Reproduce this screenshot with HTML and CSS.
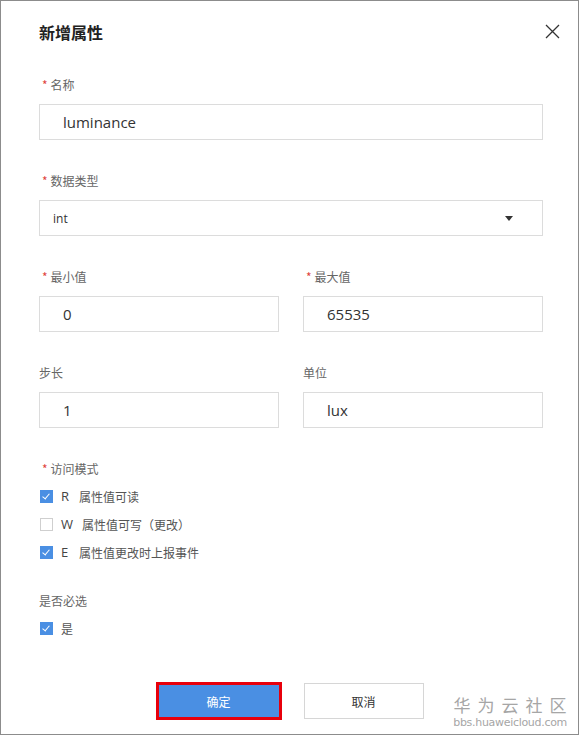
FILE: index.html
```html
<!DOCTYPE html>
<html lang="zh-CN">
<head>
  <meta charset="UTF-8" />
  <meta name="viewport" content="width=device-width, initial-scale=1.0" />
  <title>新增属性</title>
  <link rel="stylesheet" href="styles.css">
</head>
<body>
  <div class="dialog">
    <div class="dialog-head">
      <h3>新增属性</h3>
      <span class="close">
        <svg width="15" height="15" viewBox="0 0 15 15"><path d="M1 1 L14 14 M14 1 L1 14" stroke="#333" stroke-width="1.3" fill="none"/></svg>
      </span>
    </div>

    <div class="field">
      <label class="required">名称</label>
      <div class="input">luminance</div>
    </div>

    <div class="field">
      <label class="required">数据类型</label>
      <div class="input select">int<span class="caret"></span></div>
    </div>

    <div class="row">
      <div class="field">
        <label class="required">最小值</label>
        <div class="input">0</div>
      </div>
      <div class="field">
        <label class="required">最大值</label>
        <div class="input">65535</div>
      </div>
    </div>

    <div class="row">
      <div class="field">
        <label>步长</label>
        <div class="input">1</div>
      </div>
      <div class="field">
        <label>单位</label>
        <div class="input">lux</div>
      </div>
    </div>

    <div class="field">
      <label class="required">访问模式</label>
      <div class="checks">
        <div class="check on"><i></i><b>R</b>属性值可读</div>
        <div class="check"><i></i><b class="w">W</b>属性值可写（更改）</div>
        <div class="check on"><i></i><b>E</b>属性值更改时上报事件</div>
      </div>
    </div>

    <div class="field tight">
      <label>是否必选</label>
      <div class="checks">
        <div class="check on"><i></i>是</div>
      </div>
    </div>

    <div class="dialog-foot">
      <button class="btn primary">确定</button>
      <button class="btn">取消</button>
    </div>

    <div class="mark">
      <div class="mark-cn">华为云社区</div>
      <div class="mark-en">bbs.huaweicloud.com</div>
    </div>
  </div>
</body>
</html>
```

FILE: styles.css
```css
body {
  margin: 0;
  background: #fff;
  font-family: "Open Sans", "Noto Sans CJK SC", sans-serif;
  color: #333;
}
.dialog {
  position: relative;
  box-sizing: border-box;
  width: 579px;
  height: 735px;
  border: 1px solid #8c8c8c;
  padding: 0 35px 0 38px;
  background: #fff;
}
.dialog-head {
  display: flex;
  justify-content: space-between;
  align-items: center;
  height: 62px;
}
.dialog-head h3 {
  margin: 0;
  font-size: 16px;
  font-weight: bold;
  color: #222;
  font-family: "Noto Sans CJK SC", sans-serif;
}
.close {
  display: flex;
  margin-right: -17px;
  margin-top: -1px;
}

/* form blocks */
.field {
  display: flex;
  flex-direction: column;
  flex: 1;
}
.row {
  display: flex;
  gap: 24px;
}
.dialog > .field,
.dialog > .row {
  margin-top: 32px;
}
.dialog > .dialog-head + .field {
  margin-top: 13px;
}
.dialog > .field.tight {
  margin-top: 26px;
}
.field label {
  font-size: 12px;
  line-height: 18px;
  color: #666;
  font-family: "Noto Sans CJK SC", sans-serif;
}
.required::before {
  content: "*";
  color: #e0443c;
  margin: 0 3px;
}
.input {
  box-sizing: border-box;
  height: 36px;
  margin-top: 10px;
  border: 1px solid #dcdcdc;
  padding: 0 23px;
  display: flex;
  align-items: center;
  font-size: 15px;
  color: #333;
}
.select {
  padding: 0 13px;
  font-size: 12px;
  justify-content: space-between;
}
.caret {
  width: 0;
  height: 0;
  border-left: 4px solid transparent;
  border-right: 4px solid transparent;
  border-top: 5px solid #333;
  margin-right: 16px;
}

/* checkboxes */
.checks {
  margin-top: 4px;
}
.check {
  display: flex;
  align-items: center;
  height: 28px;
  font-size: 12px;
  color: #555;
  font-family: "Noto Sans CJK SC", sans-serif;
}
.check i {
  box-sizing: border-box;
  width: 13px;
  height: 13px;
  border: 1px solid #cfcfcf;
  background: #fff;
  margin: 0 8px 0 1px;
  position: relative;
}
.check.on i {
  background: #4a8fe3;
  border-color: #4a8fe3;
}
.check.on i::after {
  content: "";
  position: absolute;
  left: 3px;
  top: 1px;
  width: 3px;
  height: 6px;
  border: solid #fff;
  border-width: 0 1.5px 1.5px 0;
  transform: rotate(40deg);
}
.check b {
  font-weight: normal;
  font-family: "Open Sans", sans-serif;
  font-size: 13px;
  width: 18px;
  color: #444;
}
.check b.w {
  width: 21px;
}

/* footer */
.dialog-foot {
  display: flex;
  justify-content: center;
  align-items: center;
  gap: 25px;
  margin-top: 41px;
}
.btn {
  box-sizing: border-box;
  width: 120px;
  height: 36px;
  border: 1px solid #d6d6d6;
  background: #fff;
  font-size: 12px;
  color: #333;
  font-family: "Noto Sans CJK SC", sans-serif;
}
.btn.primary {
  height: 32px;
  border: none;
  background: #4a8fe3;
  color: #fff;
  outline: 3px solid #e8000b;
}
.mark {
  position: absolute;
  right: 11px;
  bottom: 5px;
  text-align: center;
  color: #a6a6a6;
}
.mark-cn {
  font-size: 17px;
  letter-spacing: 7px;
  margin-right: -7px;
  line-height: 22px;
  font-family: "Noto Sans CJK SC", sans-serif;
}
.mark-en {
  font-size: 11px;
  line-height: 13px;
  font-family: "DejaVu Sans", sans-serif;
  letter-spacing: -0.3px;
}
```
